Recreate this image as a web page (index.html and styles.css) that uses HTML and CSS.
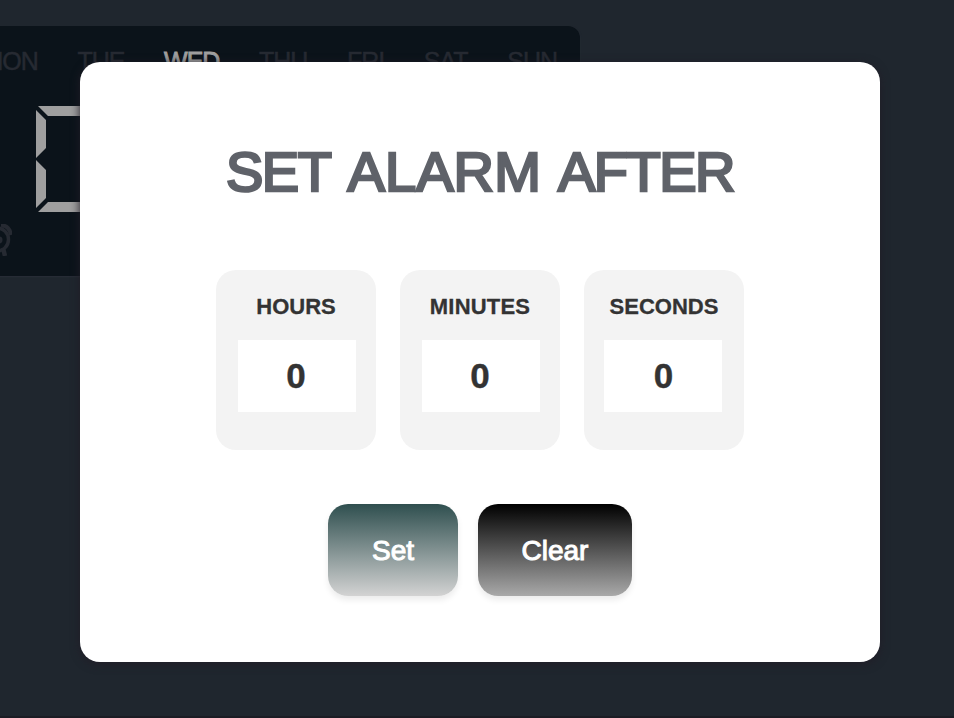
FILE: index.html
```html
<!DOCTYPE html>
<html lang="en">
<head>
<meta charset="utf-8">
<title>Alarm clock</title>
<link rel="stylesheet" href="styles.css">
</head>
<body>
<main class="stage">
  <section class="clock">
    <div class="days"><span>MON</span><span>TUE</span><span class="today">WED</span><span>THU</span><span>FRI</span><span>SAT</span><span>SUN</span></div>
    <svg class="digit" width="72" height="106" viewBox="0 0 72 106">
      <path d="M2 0H70L60 10H12Z M0 4L10 14V42L0 52Z M0 54L10 64V92L0 102Z M12 96H60L70 106H2Z"/>
    </svg>
    <svg class="bell" width="28" height="32" viewBox="0 0 28 32" fill="none">
      <circle cx="13" cy="15.5" r="11.5" stroke-width="3.5"/>
      <path d="M17 1.5Q25 1 27 11" stroke-width="4"/>
      <path d="M19 24L21 32" stroke-width="4.5"/>
      <circle cx="15" cy="16" r="2" stroke-width="3"/>
    </svg>
  </section>
  <section class="dialog">
    <h1><span class="tight">SET</span> <span class="wide">ALARM</span> <span class="tight">AFTER</span></h1>
    <div class="fields">
      <label class="field"><span>HOURS</span><b>0</b></label>
      <label class="field"><span class="minutes">MINUTES</span><b>0</b></label>
      <label class="field last"><span>SECONDS</span><b>0</b></label>
    </div>
    <div class="actions">
      <button class="set">Set</button>
      <button class="clear">Clear</button>
    </div>
  </section>
</main>
</body>
</html>
```
FILE: styles.css
```css
* { box-sizing: border-box; }
body { margin: 0; background: #1f262e; font-family: "Liberation Sans", Arial, sans-serif; }
.stage { position: relative; width: 954px; height: 718px; overflow: hidden; padding: 62px 74px 0 80px; border-bottom: 2px solid #1b1c24; }
.clock { position: absolute; left: -60px; top: 26px; width: 640px; height: 250px; border-radius: 0 12px 12px 0; background: #0b131a; box-shadow: 0 1px 2px #292e38; }
.days { display: flex; justify-content: flex-end; gap: 39.6px; padding: 21px 23px 0 0; font-size: 25px; line-height: 29px; letter-spacing: -1px; color: #262a32; -webkit-text-stroke: .5px #262a32; }
.today { color: #9f9f9f; -webkit-text-stroke: .9px #9f9f9f; }
.digit { position: absolute; left: 96px; top: 80px; fill: #9f9f9f; }
.bell { position: absolute; left: 44px; top: 198px; stroke: #262a32; }
.dialog { position: relative; width: 800px; height: 600px; padding-top: 77px; border-radius: 20px; background: #fff; box-shadow: 0 2px 10px #211d27; }
h1 { margin: 0; height: 131px; text-align: center; font-size: 56px; line-height: 66px; font-weight: 400; word-spacing: 1.5px; white-space: nowrap; color: #5f6269; -webkit-text-stroke: 2.6px #5f6269; }
.tight { letter-spacing: -1.5px; }
.wide { letter-spacing: .1px; }
.fields { display: flex; justify-content: center; gap: 24px; }
.field { width: 160px; height: 180px; padding: 24px 20px 0 22px; border-radius: 20px; background: #f3f3f3; color: #333; font-weight: 700; text-align: center; }
.field span { display: block; height: 46px; margin: 0 -10px 0 -12px; font-size: 22px; line-height: 25px; -webkit-text-stroke: .3px #333; }
.field .minutes { letter-spacing: .2px; }
.field b { display: block; width: 118px; height: 72px; padding-right: 2px; background: #fff; font-size: 35px; line-height: 72px; -webkit-text-stroke: .4px #333; }
.last { padding-left: 20px; padding-right: 22px; }
.field.last span { margin: 0 -12px 0 -10px; }
.last b { padding: 0 0 0 1px; }
.actions { display: flex; justify-content: center; gap: 20px; margin-top: 54px; }
button { height: 92px; padding: 1px 0 0; border: 0; border-radius: 20px; font: 28px "Liberation Sans", Arial, sans-serif; color: #fff; -webkit-text-stroke: 1px #fff; box-shadow: 0 4px 6px rgba(0,0,0,.08); }
.set { width: 130px; background: linear-gradient(#2f4f4f, #d3d3d3); }
.clear { width: 154px; background: linear-gradient(#000, #a9a9a9); }
```
